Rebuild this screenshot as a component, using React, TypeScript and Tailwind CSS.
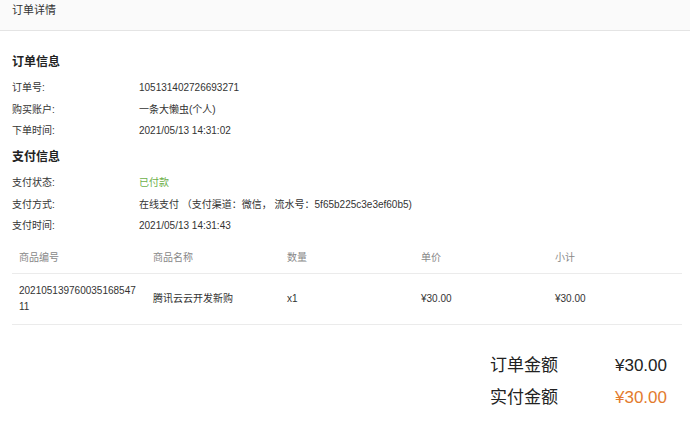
const font = { fontFamily: '"Liberation Sans", "Noto Sans CJK SC", sans-serif' }

const orderRows = [
  ['订单号:', '105131402726693271'],
  ['购买账户:', '一条大懒虫(个人)'],
  ['下单时间:', '2021/05/13 14:31:02'],
]

const cols = ['商品编号', '商品名称', '数量', '单价', '小计']

function InfoRow({ label, children }: { label: string; children: React.ReactNode }) {
  return (
    <div className="flex h-[21.5px] items-center text-[10px] text-[#333]">
      <div className="w-[127px]">{label}</div>
      <div>{children}</div>
    </div>
  )
}

export default function App() {
  return (
    <div className="w-[690px] h-[424px] overflow-hidden bg-white" style={font}>
      <div className="h-[31px] bg-[#fafafa] border-b border-[#e4e4e4] px-[12px] pt-[3px] text-[11px] leading-[14px] text-[#333]">
        订单详情
      </div>

      <div className="pl-[12px] pr-[8px]">
        <div className="mt-[20px] h-[22px] leading-[22px] text-[12px] font-bold text-[#222]">订单信息</div>
        <div className="mt-[4px]">
          {orderRows.map(([l, v]) => (
            <InfoRow key={l} label={l}>{v}</InfoRow>
          ))}
        </div>

        <div className="mt-[4.5px] h-[22px] leading-[22px] text-[12px] font-bold text-[#222]">支付信息</div>
        <div className="mt-[4px]">
          <InfoRow label="支付状态:">
            <span className="text-[#6cb04a]">已付款</span>
          </InfoRow>
          <InfoRow label="支付方式:">在线支付 （支付渠道：微信， 流水号：5f65b225c3e3ef60b5)</InfoRow>
          <InfoRow label="支付时间:">2021/05/13 14:31:43</InfoRow>
        </div>

        <div className="mt-[4.5px] w-[670px]">
          <div className="grid grid-cols-5 h-[33px] items-center border-b border-[#ebebeb] text-[10px] text-[#888]">
            {cols.map((c) => (
              <div key={c} className="px-[7px]">{c}</div>
            ))}
          </div>
          <div className="grid grid-cols-5 h-[51px] items-center border-b border-[#ebebeb] text-[10px] leading-[16px] text-[#333]">
            <div className="px-[7px] break-all">20210513976003516854711</div>
            <div className="px-[7px]">腾讯云云开发新购</div>
            <div className="px-[7px]">x1</div>
            <div className="px-[7px]">¥30.00</div>
            <div className="px-[7px]">¥30.00</div>
          </div>
        </div>
      </div>

      <div className="mt-[25px] flex flex-col items-end pr-[23px] text-[17px] text-[#222]">
        <div className="flex h-[32px] items-center">
          <div className="w-[110px]">订单金额</div>
          <div className="w-[67px] text-right">¥30.00</div>
        </div>
        <div className="flex h-[32px] items-center">
          <div className="w-[110px]">实付金额</div>
          <div className="w-[67px] text-right text-[#e37b2e]">¥30.00</div>
        </div>
      </div>
    </div>
  )
}
